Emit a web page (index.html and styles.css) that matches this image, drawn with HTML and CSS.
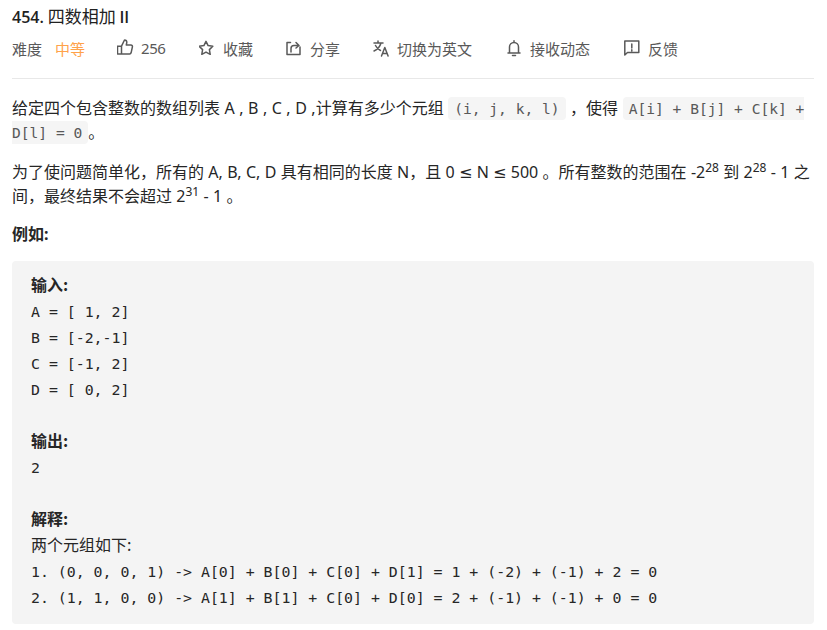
FILE: index.html
```html
<!DOCTYPE html>
<html lang="zh">
<head>
<meta charset="utf-8">
<title>454. 四数相加 II</title>
<link rel="stylesheet" href="styles.css">
</head>
<body>
<main class="page">
  <h1 class="title"><span class="num">454.</span> 四数相加 <span class="num">II</span></h1>
  <div class="meta">
    <span class="meta-item label">难度</span>
    <span class="meta-item level">中等</span>
    <span class="meta-item like"><svg class="icon" viewBox="1 1 18 18"><path d="M5.500 8v8M1.500 8.200h4l3-6.200c1.400 0 2.300 1 2.300 2.300L10.300 7h4.600c1 0 1.700.9 1.500 1.900l-1.300 5.900c-.2.7-.8 1.200-1.500 1.200H1.500z"/></svg><span class="count">256</span></span>
    <span class="meta-item star"><svg class="icon" viewBox="2 0 18 18"><path d="M9 2.300l2.100 4.300 4.700.7-3.400 3.300.8 4.700L9 13.100l-4.200 2.200.8-4.700-3.400-3.300 4.700-.7z"/></svg>收藏</span>
    <span class="meta-item share"><svg class="icon" viewBox="1.500 0 18 18"><path d="M6 3.500H2.500v12h13V8M6.500 13V9.500c0-1.800 1.200-3 3-3H14M11.500 3.500L14.500 6.500 11.500 9"/></svg>分享</span>
    <span class="meta-item lang"><svg class="icon" viewBox="0.500 -0.500 18 18"><path d="M1.500 3.500h9M5.500 1.500v2M8.500 3.500C7.500 7 5 10 1.500 11.500M3 6c1 2 3 4 5 5M9 16.500l3.300-8.500 3.300 8.500M10.200 14h4.200"/></svg>切换为英文</span>
    <span class="meta-item bell"><svg class="icon" viewBox="0 0 18 18"><path d="M2 14h12M3.500 14V8c0-2.500 2-4.500 4.500-4.500s4.500 2 4.500 4.500v6M8 1.800v1.700M6.500 16.500h3"/></svg>接收动态</span>
    <span class="meta-item report"><svg class="icon" viewBox="0 0 18 18"><path d="M.8 2h14v11.500H3.500L.8 16zM7.800 5v4M7.800 10.800V12"/></svg>反馈</span>
  </div>
  <article class="content">
    <p class="spaced">给定四个包含整数的数组列表 A , B , C , D ,计算有多少个元组 <code>(i, j, k, l)</code> ，使得 <code>A[i] + B[j] + C[k] + D[l] = 0</code>。</p>
    <p class="ranges">为了使问题简单化，所有的 A, B, C, D 具有相同的长度 N，且 0 ≤ N ≤ 500 。所有整数的范围在 -2<sup>28</sup> 到 2<sup>28</sup> - 1 之间，最终结果不会超过 2<sup>31</sup> - 1 。</p>
    <p><strong>例如:</strong></p>
    <pre><strong class="cjk">输入:</strong>
A = [ 1, 2]
B = [-2,-1]
C = [-1, 2]
D = [ 0, 2]

<strong class="cjk">输出:</strong>
2

<strong class="cjk">解释:</strong>
<span class="cjk">两个元组如下:</span>
1. (0, 0, 0, 1) -&gt; A[0] + B[0] + C[0] + D[1] = 1 + (-2) + (-1) + 2 = 0
2. (1, 1, 0, 0) -&gt; A[1] + B[1] + C[0] + D[0] = 2 + (-1) + (-1) + 0 = 0</pre>
  </article>
</main>
</body>
</html>
```
FILE: styles.css
```css
* { box-sizing: border-box; }
html, body { margin: 0; height: 630px; overflow: hidden; background: #fff; }
body { font-family: "Noto Sans", "DejaVu Sans", "Noto Sans CJK SC", sans-serif; color: #262626; }
.page { padding: 0 13px 0 12px; }
.title { margin: 0; padding-top: 6px; height: 32px; font-size: 17px; line-height: 20px; font-weight: 400; color: #212121; font-family: "Noto Sans CJK SC", sans-serif; }
.num { font-family: "Open Sans", sans-serif; font-weight: 600; font-size: 16px; }
.meta { display: flex; align-items: center; height: 32px; font-size: 15px; color: #595959; }
.meta-item { display: inline-flex; align-items: center; white-space: nowrap; }
.label { width: 43px; }
.level { width: 62px; color: #ffa24a; }
.icon { width: 18px; height: 18px; margin-right: 6px; fill: none; stroke: #595959; stroke-width: 1.5; stroke-linejoin: round; stroke-linecap: round; }
.count { letter-spacing: -.4px; }
.like { width: 82px; }
.star { width: 87px; }
.share { width: 87px; }
.lang { width: 133px; }
.bell { width: 118px; }
.content { margin-top: 14px; border-top: 1px solid #e8e8e8; padding-top: 17px; font-size: 16px; line-height: 24px; }
.content p { margin: 0 0 14px; }
.content .spaced { word-spacing: .35px; margin-bottom: 16px; }
.ranges { word-spacing: .15px; }
sup { font-size: 12px; line-height: 0; }
code { font-family: "DejaVu Sans Mono", monospace; font-size: 14.600px; line-height: 1; word-spacing: 0; color: #595959; background: #f5f5f5; border-radius: 4px; padding: 3px 6px; }
strong { font-weight: 700; }
pre { margin: 15px 0 0; padding: 12px 19px; height: 363px; background: #f4f4f4; border-radius: 4px; font-family: "DejaVu Sans Mono", "Noto Sans CJK SC", monospace; font-size: 14.870px; line-height: 26px; color: #262626; white-space: pre; }
.cjk { font-family: "Noto Sans CJK SC", sans-serif; font-size: 16px; line-height: 1; }
```
